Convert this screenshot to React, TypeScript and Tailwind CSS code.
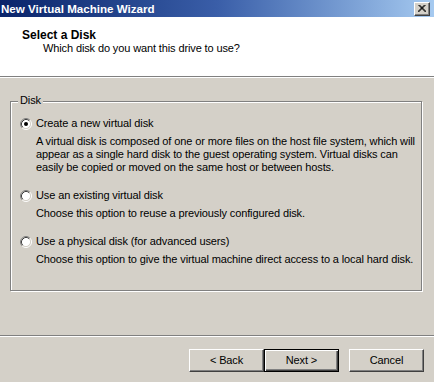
import React from "react";

function Radio({ checked }: { checked?: boolean }) {
  return (
    <svg width="12" height="12" viewBox="0 0 12 12" className="shrink-0">
      <circle cx="6" cy="6" r="4.5" fill="#ffffff" />
      <path d="M2.11 9.89 A5.5 5.5 0 0 1 9.89 2.11" fill="none" stroke="#808080" strokeWidth="1" />
      <path d="M9.89 2.11 A5.5 5.5 0 0 1 2.11 9.89" fill="none" stroke="#ffffff" strokeWidth="1" />
      <path d="M2.82 9.18 A4.5 4.5 0 0 1 9.18 2.82" fill="none" stroke="#404040" strokeWidth="1" />
      <path d="M9.18 2.82 A4.5 4.5 0 0 1 2.82 9.18" fill="none" stroke="#d4d0c8" strokeWidth="1" />
      {checked && <circle cx="6" cy="6" r="2" fill="#000000" />}
    </svg>
  );
}

const options = [
  {
    label: "Create a new virtual disk",
    desc: [
      "A virtual disk is composed of one or more files on the host file system, which will",
      "appear as a single hard disk to the guest operating system. Virtual disks can",
      "easily be copied or moved on the same host or between hosts.",
    ],
    checked: true,
  },
  {
    label: "Use an existing virtual disk",
    desc: ["Choose this option to reuse a previously configured disk."],
  },
  {
    label: "Use a physical disk (for advanced users)",
    desc: [
      "Choose this option to give the virtual machine direct access to a local hard disk.",
    ],
  },
];

export default function App() {
  return (
    <div className="flex h-[382px] w-[434px] flex-col overflow-hidden bg-[#d4d0c8] font-['Liberation_Sans',Arial,sans-serif] text-[11px] tracking-[-0.12px] text-black">
      {/* title bar */}
      <div className="flex h-[17px] items-center justify-between bg-linear-to-r from-[#0a246a] via-[#3a5ea8] to-[#a6caf0] pl-[1px] pr-[4px]">
        <span className="text-[11.6px] font-bold leading-[17px] tracking-normal text-white">
          New Virtual Machine Wizard
        </span>
        <button className="flex h-[14px] w-[16px] items-center justify-center border border-t-white border-l-white border-r-[#404040] border-b-[#404040] bg-[#d4d0c8] shadow-[inset_-1px_-1px_0_#808080]">
          <svg width="8" height="7" viewBox="0 0 8 7">
            <path d="M0.5 0 L7.5 7 M1.5 0 L8.5 7 M7.5 0 L0.5 7 M6.5 0 L-0.5 7" stroke="#000" strokeWidth="1" />
          </svg>
        </button>
      </div>

      {/* header */}
      <div className="h-[61px] border-b border-b-white bg-white shadow-[inset_0_-1px_0_#808080]">
        <div className="pl-[22px] pt-[11px]">
          <div className="text-[12px] font-bold leading-[14px] tracking-normal">Select a Disk</div>
          <div className="pl-[21px] leading-[13px]">
            Which disk do you want this drive to use?
          </div>
        </div>
      </div>

      {/* group box */}
      <div className="relative mt-[23px] ml-[10px] h-[190px] w-[412px] border border-[#808080] shadow-[inset_1px_1px_0_#fff,1px_1px_0_#fff]">
        <span className="absolute -top-[8px] left-[7px] bg-[#d4d0c8] px-[2px] leading-[13px]">
          Disk
        </span>
        <div className="flex flex-col gap-[15px] pt-[15px] pl-[9px]">
          {options.map((o) => (
            <div key={o.label} className="flex flex-col gap-[5px]">
              <div className="flex items-center gap-[4px] leading-[13px]">
                <Radio checked={o.checked} />
                <span>{o.label}</span>
              </div>
              <div className="whitespace-nowrap pl-[16px] leading-[13px]">
                {o.desc.map((d) => (
                  <div key={d}>{d}</div>
                ))}
              </div>
            </div>
          ))}
        </div>
      </div>

      {/* footer */}
      <div className="mt-auto h-[47px] border-t border-t-[#808080]">
        <div className="border-t border-t-white" />
        <div className="flex justify-end pt-[12px] pr-[10px]">
          <button className="h-[23px] w-[75px] border border-t-white border-l-white border-r-[#404040] border-b-[#404040] shadow-[inset_-1px_-1px_0_#808080]">
            &lt; Back
          </button>
          <button className="h-[23px] w-[75px] border border-black shadow-[inset_1px_1px_0_#fff,inset_-1px_-1px_0_#404040,inset_-2px_-2px_0_#808080]">
            Next &gt;
          </button>
          <button className="ml-[10px] h-[23px] w-[75px] border border-t-white border-l-white border-r-[#404040] border-b-[#404040] shadow-[inset_-1px_-1px_0_#808080]">
            Cancel
          </button>
        </div>
      </div>
    </div>
  );
}
